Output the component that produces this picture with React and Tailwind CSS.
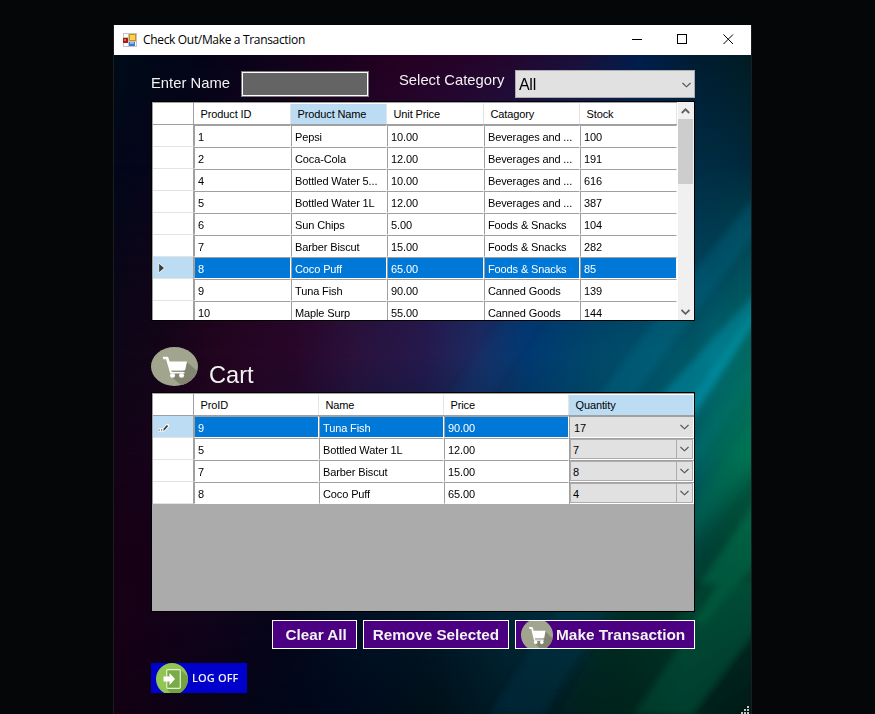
import React from "react";

const products = [
  ["1", "Pepsi", "10.00", "Beverages and ...", "100"],
  ["2", "Coca-Cola", "12.00", "Beverages and ...", "191"],
  ["4", "Bottled Water 5...", "10.00", "Beverages and ...", "616"],
  ["5", "Bottled Water 1L", "12.00", "Beverages and ...", "387"],
  ["6", "Sun Chips", "5.00", "Foods & Snacks", "104"],
  ["7", "Barber Biscut", "15.00", "Foods & Snacks", "282"],
  ["8", "Coco Puff", "65.00", "Foods & Snacks", "85"],
  ["9", "Tuna Fish", "90.00", "Canned Goods", "139"],
  ["10", "Maple Surp", "55.00", "Canned Goods", "144"],
];

const cart = [
  ["9", "Tuna Fish", "90.00", "17"],
  ["5", "Bottled Water 1L", "12.00", "7"],
  ["7", "Barber Biscut", "15.00", "8"],
  ["8", "Coco Puff", "65.00", "4"],
];

const PRODUCT_COLS = "grid-cols-[41px_97px_96px_97px_96px_97px]";
const CART_COLS = "grid-cols-[41px_125px_125px_125px_125px]";

// Horizontal colour samples of the wallpaper, one list for each height.
const bands = [
  { y: 0, stops: [[0, "#000c18"], [90, "#040418"], [186, "#13031c"], [286, "#260022"], [386, "#25052c"], [466, "#1a0f3a"], [526, "#001d4c"], [586, "#001c30"], [637, "#001c22"]] },
  { y: 110, stops: [[0, "#02071a"], [90, "#0c041a"], [200, "#220424"], [330, "#240c3c"], [450, "#0c2658"], [560, "#002c48"], [600, "#002c42"], [637, "#00283a"]] },
  { y: 210, stops: [[0, "#080618"], [90, "#180419"], [200, "#280828"], [330, "#241a4c"], [440, "#003468"], [560, "#00405c"], [600, "#004258"], [637, "#00505c"]] },
  { y: 300, stops: [[0, "#0d0718"], [46, "#140518"], [110, "#240520"], [180, "#28062a"], [240, "#2a123c"], [310, "#25194d"], [366, "#1c2c62"], [415, "#003a72"], [480, "#00486a"], [540, "#005268"], [580, "#005865"], [600, "#006772"], [637, "#006a60"]] },
  { y: 400, stops: [[0, "#140317"], [120, "#1c0520"], [300, "#0c1a40"], [460, "#00405a"], [580, "#006068"], [610, "#006854"], [637, "#007152"]] },
  { y: 490, stops: [[0, "#170016"], [140, "#13031a"], [300, "#04102c"], [450, "#00344a"], [580, "#004840"], [637, "#005236"]] },
  { y: 570, stops: [[0, "#170016"], [90, "#10031a"], [170, "#060619"], [240, "#001024"], [300, "#001424"], [390, "#002433"], [450, "#002c38"], [510, "#003028"], [580, "#00402d"], [637, "#003a2a"]] },
  { y: 659, stops: [[0, "#130014"], [90, "#0b0316"], [170, "#000618"], [240, "#000a1c"], [320, "#001018"], [400, "#001d28"], [450, "#001c22"], [510, "#00221b"], [570, "#002e24"], [637, "#001d16"]] },
];

const streaks = [
  ["475,355 530,280 650,130 670,140 565,280 510,355", "#007896", 0.25],
  ["535,358 549,338 650,229 650,254 581,359 560,390", "#0090a8", 0.5],
  ["566,360 650,240 650,254 575,368", "#00a4bc", 0.3],
  ["540,440 650,294 650,314 560,440", "#007a70", 0.2],
  ["550,489 650,351 650,383 560,510", "#00805c", 0.2],
  ["530,568 650,403 650,436 560,568", "#00302a", 0.35],
  ["560,568 650,437 650,498 590,568", "#007850", 0.35],
  ["521,659 611,528 656,528 650,564 578,659", "#005a3c", 0.4],
  ["444,659 525,528 605,528 521,659", "#002018", 0.4],
  ["578,659 650,563 650,670", "#001c16", 0.45],
  ["375,659 460,528 510,528 430,659", "#003c4c", 0.3],
  ["330,350 400,245 440,245 370,350", "#24408a", 0.12],
];

function Wallpaper() {
  return (
    <svg className="absolute inset-0" width="637" height="659" viewBox="0 0 637 659" aria-hidden="true">
      <defs>
        <filter id="soft" x="-20%" y="-20%" width="140%" height="140%">
          <feGaussianBlur stdDeviation="3" />
        </filter>
        {bands.map((band, i) => {
          const previous = i === 0 ? 0 : bands[i - 1].y;
          return (
            <React.Fragment key={band.y}>
              <linearGradient id={`band${i}`} gradientUnits="userSpaceOnUse" x1="0" x2="637" y1="0" y2="0">
                {band.stops.map(([x, color]) => (
                  <stop key={x} offset={x / 637} stopColor={color} />
                ))}
              </linearGradient>
              <linearGradient id={`fade${i}`} gradientUnits="userSpaceOnUse" x1="0" x2="0" y1={previous} y2={i === 0 ? 1 : band.y}>
                <stop offset="0" stopColor="#fff" stopOpacity={i === 0 ? 1 : 0} />
                <stop offset="1" stopColor="#fff" />
              </linearGradient>
              <mask id={`mask${i}`} maskUnits="userSpaceOnUse" x="0" y="0" width="637" height="659" style={{ maskType: "alpha" }}>
                <rect y={previous} width="637" height={659 - previous} fill={`url(#fade${i})`} />
              </mask>
            </React.Fragment>
          );
        })}
      </defs>
      {bands.map((band, i) => (
        <rect key={band.y} width="637" height="659" fill={`url(#band${i})`} mask={`url(#mask${i})`} />
      ))}
      <g filter="url(#soft)">
        {streaks.map(([points, fill, opacity]) => (
          <polygon key={points} points={points} fill={fill} opacity={opacity} />
        ))}
      </g>
    </svg>
  );
}

function FormIcon() {
  return (
    <svg width="14" height="14" viewBox="0 0 14 14" shapeRendering="crispEdges">
      <rect width="14" height="14" fill="#c4c4c4" />
      <rect x="1" y="1" width="4" height="3" fill="#fff" />
      <rect x="1" y="10" width="4" height="3" fill="#fff" />
      <rect x="6" y="1" width="7" height="7" fill="#c8921a" />
      <rect x="7" y="2" width="5" height="5" fill="#ffd34d" />
      <rect x="0" y="5" width="5" height="5" fill="#a51d14" />
      <rect x="1" y="6" width="2" height="2" fill="#e8604c" />
      <rect x="6" y="9" width="6" height="4" fill="#3f78d6" />
      <rect x="7" y="9" width="4" height="2" fill="#86b4f4" />
      <rect x="12" y="9" width="1" height="4" fill="#fff" />
    </svg>
  );
}

function CartBadge({ width, height }) {
  return (
    <svg className="shrink-0" width={width} height={height} viewBox="0 0 48 48" preserveAspectRatio="none">
      <defs>
        <clipPath id={`disc${width}`}>
          <circle cx="24" cy="24" r="24" />
        </clipPath>
      </defs>
      <g clipPath={`url(#disc${width})`}>
        <rect width="48" height="48" fill="#a2a58e" />
        <path d="M36 18 L50 32 L50 50 L34 50 L20 36 L20 30 L33 30 Z" fill="#828570" />
      </g>
      <path d="M12 12h4.400c.7 0 1.100.4 1.300 1l1.300 4.800h17.800l-1.800 10c-.1.800-.6 1.200-1.300 1.200H20.600l.6 1.800h13v1.700H19.600L15.400 15H12.600z" fill="#fff" />
      <ellipse cx="22" cy="35" rx="2.600" ry="2.700" fill="#fff" />
      <ellipse cx="31.200" cy="35" rx="2.600" ry="2.700" fill="#fff" />
    </svg>
  );
}

function ExitBadge() {
  return (
    <svg className="shrink-0" width="32" height="32" viewBox="0 0 32 32">
      <defs>
        <clipPath id="exit">
          <circle cx="16" cy="16" r="16" />
        </clipPath>
      </defs>
      <g clipPath="url(#exit)">
        <rect width="32" height="32" fill="#91c653" />
        <path d="M24 6 L34 16 V34 H18 L10.500 25.500 Z" fill="#74a142" />
      </g>
      <rect x="10.700" y="6.700" width="13.600" height="18.600" rx="1" fill="#7bab48" stroke="#e4f0d2" strokeWidth="1.200" />
      <path d="M7.500 13.500h6V10l5.500 6-5.500 6v-3.500h-6z" fill="#fff" />
    </svg>
  );
}

function Chevron({ up = false, heavy = false, color = "#505050" }) {
  return (
    <svg className="shrink-0" width="9" height="6" viewBox="0 0 9 6" fill="none">
      <path d={up ? "M.8 5 4.500 1.300 8.200 5" : "M.5 1 4.500 4.800 8.500 1"} stroke={color} strokeWidth={heavy ? 1.800 : 1.100} />
    </svg>
  );
}

function HeaderCell({ label, active }) {
  return (
    <div className={`h-[21px] border-t border-r border-t-white border-r-[#e5e5e5] pl-[6.5px] leading-[21px] ${active ? "bg-[#bcdcf4]" : "bg-white"}`}>
      {label}
    </div>
  );
}

function Cell({ children, selected }) {
  return (
    <div className="h-[22px] border-b border-l border-r border-t border-b-white border-l-[#a0a0a0] border-r-white border-t-[#a0a0a0] bg-white">
      <div className={`h-5 overflow-hidden pl-[3px] leading-[22px] whitespace-nowrap ${selected ? "bg-[#0078d7] text-white" : "bg-white"}`}>
        {children}
      </div>
    </div>
  );
}

function RowHeader({ selected, children }) {
  return (
    <div className={`flex h-[22px] items-center border-r border-b border-r-[#a0a0a0] border-b-[#e3e3e3] ${selected ? "bg-[#bcdcf4]" : "bg-white"}`}>
      {children}
    </div>
  );
}

function QuantityCell({ value, editing }) {
  return (
    <div className="h-[22px] border-t border-l border-t-[#a0a0a0] border-l-[#a0a0a0] bg-white pr-px">
      <div className={`flex h-5 items-stretch bg-[#e1e1e1] ${editing ? "" : "border border-[#adadad]"}`}>
        <span className={editing ? "grow pl-1 leading-[22px]" : "grow pl-[2px] leading-5"}>{value}</span>
        <span className={`flex w-4 items-center justify-center ${editing ? "mr-px" : "border-l border-[#adadad]"}`}>
          <Chevron />
        </span>
      </div>
    </div>
  );
}

function ProductGrid() {
  return (
    <div className="-ml-px flex h-[220px] w-[544px] border border-black bg-white text-[11px] tracking-[-0.12px] text-black">
      <div className="h-full w-[525px] overflow-hidden border-t border-l border-[#a0a0a0]">
        <div className={`grid h-[22px] border-b border-[#a0a0a0] ${PRODUCT_COLS}`}>
          <div className="border-r border-[#a0a0a0]" />
          <HeaderCell label="Product ID" />
          <HeaderCell label="Product Name" active />
          <HeaderCell label="Unit Price" />
          <HeaderCell label="Catagory" />
          <HeaderCell label="Stock" />
        </div>
        {products.map((row) => {
          const selected = row[0] === "8";
          return (
            <div key={row[0]} className={`grid ${PRODUCT_COLS}`}>
              <RowHeader selected={selected}>
                {selected && (
                  <svg className="ml-[5px]" width="8" height="12" viewBox="0 0 8 12">
                    <path d="M.7 1 6.500 6 .7 11z" fill="#3c3c3c" stroke="#fff" strokeWidth=".8" />
                  </svg>
                )}
              </RowHeader>
              {row.map((value, i) => (
                <Cell key={i} selected={selected}>{value}</Cell>
              ))}
            </div>
          );
        })}
      </div>
      <div className="ml-px flex w-4 flex-col items-center bg-[#f0f0f0]">
        <span className="mr-px flex h-[17px] items-center pt-px"><Chevron up heavy color="#606060" /></span>
        <div className="h-[65px] w-[15px] self-start bg-[#cdcdcd]" />
        <span className="mt-auto mr-px flex h-[17px] items-center"><Chevron heavy color="#606060" /></span>
      </div>
    </div>
  );
}

function CartGrid() {
  return (
    <div className="-ml-px h-[220px] w-[544px] border border-black bg-[#ababab] text-[11px] tracking-[-0.12px] text-black">
      <div className="overflow-hidden border-t border-l border-[#a0a0a0] bg-white">
        <div className={`grid h-[22px] border-b border-[#a0a0a0] ${CART_COLS}`}>
          <div className="border-r border-[#a0a0a0]" />
          <HeaderCell label="ProID" />
          <HeaderCell label="Name" />
          <HeaderCell label="Price" />
          <HeaderCell label="Quantity" active />
        </div>
        {cart.map(([id, name, price, quantity], i) => (
          <div key={id} className={`grid ${CART_COLS}`}>
            <RowHeader selected={i === 0}>
              {i === 0 && (
                <svg className="ml-1" width="14" height="10" viewBox="0 0 14 10">
                  <path d="M7 7.500 10.500 3.500" stroke="#fff" strokeWidth="3.500" strokeLinecap="round" />
                  <path d="M1 8h6" stroke="#fff" strokeWidth="3" />
                  <path d="M7 7.500 10.500 3.500" stroke="#333" strokeWidth="1.800" />
                  <path d="M1.500 8h1.200M4 8h1.200M6.300 8h1.200" stroke="#222" strokeWidth="1.200" />
                </svg>
              )}
            </RowHeader>
            <Cell selected={i === 0}>{id}</Cell>
            <Cell selected={i === 0}>{name}</Cell>
            <Cell selected={i === 0}>{price}</Cell>
            <QuantityCell value={quantity} editing={i === 0} />
          </div>
        ))}
      </div>
    </div>
  );
}

function TitleBar() {
  return (
    <header className="flex h-[30px] items-center bg-white pl-[9px] text-black">
      <FormIcon />
      <h1 className="ml-[6px] grow font-['Open_Sans',sans-serif] text-[12px] tracking-[-0.33px]">Check Out/Make a Transaction</h1>
      <svg className="mr-[17px] mb-px" width="102" height="11" viewBox="0 0 102 11" fill="none" stroke="#000">
        <path d="M0 5.500h10" />
        <rect x="45.500" y=".5" width="9" height="9" />
        <path d="M91.500 .5l9.500 9.500M101 .5 91.500 10" />
      </svg>
    </header>
  );
}

export default function App() {
  return (
    <div className="h-[714px] w-[875px] overflow-hidden bg-[#040607] pt-[25px] pl-[113px] font-['Liberation_Sans',Arial,sans-serif]">
      <div className="h-[689px] w-[639px] border-x border-[#1d1d1f]">
        <TitleBar />
        <main className="relative h-[659px] overflow-hidden">
          <Wallpaper />
          <div className="relative flex h-full flex-col pl-[38px] text-[#f2f2f2]">
            <div className="-ml-px flex h-[46px] items-start text-[14.8px]">
              <label className="mt-[17px] w-[90px] leading-[22px]">Enter Name</label>
              <div className="mt-4 h-[26px] w-32 border border-[#7a7a7a] bg-[#646464]">
                <div className="h-full border border-white" />
              </div>
              <label className="mt-[14px] ml-[30px] w-[116px] leading-[22px]">Select Category</label>
              <div className="mt-[15px] flex h-7 w-[180px] items-center justify-between border border-[#adadad] bg-[#e1e1e1] pt-px pr-[3px] pl-[3px] text-[16px] tracking-[-0.3px] text-black">
                All
                <Chevron />
              </div>
            </div>
            <ProductGrid />
            <div className="-ml-px flex h-[71px] items-start pt-[26px]">
              <CartBadge width={47} height={39} />
              <h2 className="mt-[13px] ml-[11px] text-[23.6px] leading-[30px]">Cart</h2>
            </div>
            <CartGrid />
            <div className="mt-2 ml-[120px] flex h-[29px] text-[14px] leading-[27px] font-bold">
              <button className="flex w-[85px] items-start justify-center border border-white bg-[#4b0082] pt-px pl-1">
                <span className="scale-x-[1.090]">Clear All</span>
              </button>
              <button className="ml-[6px] flex w-[146px] items-start justify-center border border-white bg-[#4b0082] pt-px">
                <span className="scale-x-[1.090]">Remove Selected</span>
              </button>
              <button className="ml-[6px] flex w-[180px] items-start overflow-hidden border border-white bg-[#4b0082] pl-[5px]">
                <span className="-mt-[2px] block h-8 w-8 shrink-0"><CartBadge width={32} height={32} /></span>
                <span className="ml-[3px] origin-left scale-x-[1.1] pt-px whitespace-nowrap">Make Transaction</span>
              </button>
            </div>
            <button className="mt-[14px] -ml-px flex h-[30px] w-24 items-start overflow-hidden bg-[#0000cd] pl-[5px]">
              <ExitBadge />
              <span className="ml-1 font-['Open_Sans',sans-serif] text-[11px] leading-[30px] font-semibold tracking-[0.1px] whitespace-nowrap">LOG OFF</span>
            </button>
          </div>
          <svg className="absolute right-[2px] bottom-0" width="8" height="8" fill="#c4c4c4" shapeRendering="crispEdges">
            <path d="M6 0h2v2H6zM3 3h2v2H3zM6 3h2v2H6zM0 6h2v2H0zM3 6h2v2H3zM6 6h2v2H6z" />
          </svg>
        </main>
      </div>
    </div>
  );
}
